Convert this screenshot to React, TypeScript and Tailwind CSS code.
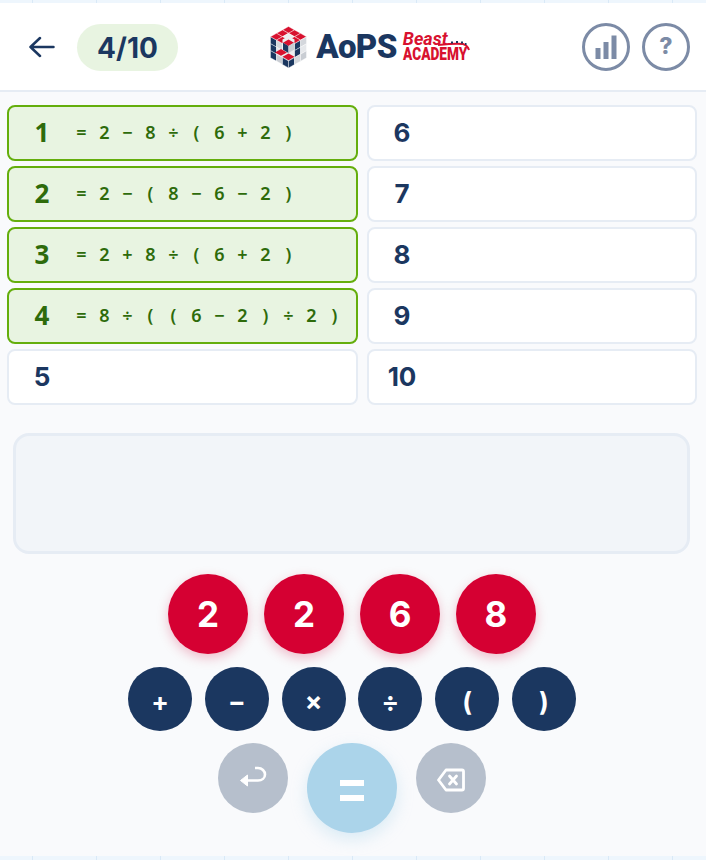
const rows = [
  { n: 1, tokens: ["=", "2", "−", "8", "÷", "(", "6", "+", "2", ")"] },
  { n: 2, tokens: ["=", "2", "−", "(", "8", "−", "6", "−", "2", ")"] },
  { n: 3, tokens: ["=", "2", "+", "8", "÷", "(", "6", "+", "2", ")"] },
  { n: 4, tokens: ["=", "8", "÷", "(", "(", "6", "−", "2", ")", "÷", "2", ")"] },
  { n: 5, tokens: [] },
]
const rightRows = [6, 7, 8, 9, 10]

const ticks = Array.from({ length: 11 })

const TickStrip = ({ tall }: { tall?: boolean }) => (
  <div className={tall ? "flex h-[4px] bg-[#eef6fd] pl-[32px]" : "flex h-[3px] bg-[#eef6fd] pl-[32px]"}>
    {ticks.map((_, i) => (
      <div key={i} className="w-[64px] shrink-0 border-l border-[#d9e9f7]" />
    ))}
  </div>
)

// one isometric tile, walking along the cube's edges
const tile = (x: number, y: number, u: number[], v: number[]) =>
  [
    [x, y],
    [x + u[0], y + u[1]],
    [x + u[0] + v[0], y + u[1] + v[1]],
    [x + v[0], y + v[1]],
  ]
    .map((p) => p.join(","))
    .join(" ")

const A = [6, 3.4]
const B = [-6, 3.4]
const C = [0, 7]
const leftColors = [
  ["#1b3760", "#d4d7dc", "#eceef0"],
  ["#1b3760", "#e6e8eb", "#c9cdd3"],
  ["#1b3760", "#c9cdd3", "#1b3760"],
]
const rightColors = [
  ["#eceef0", "#1b3760", "#d4d7dc"],
  ["#c9cdd3", "#1b3760", "#e6e8eb"],
  ["#1b3760", "#d4d7dc", "#c9cdd3"],
]

const Cube = () => (
  <svg width="37" height="42" viewBox="0 0 37 42">
    {[0, 1, 2].map((i) =>
      [0, 1, 2].map((j) => (
        <g key={`${i}${j}`} stroke="#ffffff" strokeWidth="0.4">
          <polygon
            points={tile(18.5 + A[0] * i + B[0] * j, 0.5 + A[1] * i + B[1] * j, A, B)}
            fill={i === 1 && j === 1 ? "#eceef0" : "#d8112f"}
          />
          <polygon
            points={tile(0.5 + A[0] * i, 10.7 + A[1] * i + C[1] * j, A, C)}
            fill={leftColors[j][i]}
          />
          <polygon
            points={tile(18.5 + (-B[0]) * i, 21 - B[1] * i + C[1] * j, [-B[0], -B[1]], C)}
            fill={rightColors[j][i]}
          />
        </g>
      )),
    )}
    <polygon points="18.5,10 24.5,13.4 24.5,31 18.5,34 12.5,31 12.5,13.4" fill="#eceef0" />
    <polygon points="18.5,13.5 24,16.7 18.5,20 13,16.7" fill="#d8112f" />
    <polygon points="13,16.7 18.5,20 18.5,27 13,23.7" fill="#1b3760" />
    <polygon points="18.5,20 24,16.7 24,23.7 18.5,27" fill="#c9cdd3" />
    <polygon points="11,23 17,26.4 11,29.8 5,26.4" fill="#d8112f" />
    <polygon points="18.5,27.4 24.5,30.8 18.5,34.2 12.5,30.8" fill="#d8112f" />
  </svg>
)

const Ink = "#1b3760"

function Cell({ n }: { n: number }) {
  return (
    <div className="flex h-[56px] items-center rounded-[8px] border-2 border-[#e6ecf4] bg-white pb-[2px] text-[26px] font-bold text-[#1b3760]">
      <span className="w-[66px] text-center">{n}</span>
    </div>
  )
}

export default function App() {
  return (
    <div className="flex h-[860px] w-[706px] flex-col overflow-hidden bg-[#f9fafc] font-['Inter',sans-serif]">
      <TickStrip />

      <header className="flex h-[89px] shrink-0 items-center justify-between border-b-2 border-[#e6ecf4] bg-white pl-[29px] pr-[16px]">
        <div className="flex items-center gap-[22px]">
          <svg width="26" height="22" viewBox="0 0 26 22" fill="none" stroke={Ink} strokeWidth="2.5" strokeLinecap="round" strokeLinejoin="round">
            <path d="M1.5 11H24.5M11 2L1.5 11L11 20" />
          </svg>
          <div className="mt-[2px] flex h-[47px] w-[101px] items-center justify-center rounded-full bg-[#e8f4e1] text-[28px] font-bold text-[#1b3760]">
            4/10
          </div>
        </div>

        <div className="mr-[20px] flex items-center">
          <Cube />
          <span className="ml-[9px] font-['Roboto',sans-serif] text-[33px] leading-none font-black tracking-[-0.6px] text-[#1b3760]">AoPS</span>
          <div className="relative ml-[6px] flex w-[67px] flex-col font-['Roboto',sans-serif] text-[#d8112f]">
            <span className="text-[18px] leading-[14px] font-bold italic">Beast</span>
            <span className="origin-left scale-x-[0.72] text-[19px] leading-[15px] font-black whitespace-nowrap">ACADEMY</span>
            <svg className="absolute top-[7px] left-[34px]" width="33" height="12" viewBox="0 0 33 12" fill="none">
              <path d="M1 6C10 5 20 4 26 5C29 6 31 8 32 11" stroke="#d8112f" strokeWidth="2" />
              <path d="M14 3.5H16M19 3H21M24 3.5H26M28 5H29.5" stroke="#1b3760" strokeWidth="1.8" />
            </svg>
          </div>
        </div>

        <div className="flex items-center gap-[12px]">
          <div className="flex h-[48px] w-[48px] items-center justify-center rounded-full border-[3px] border-[#7c8ba6]">
            <svg width="22" height="24" viewBox="0 0 22 24" fill="#7c8ba6">
              <rect x="0.5" y="13" width="5" height="11" />
              <rect x="8.5" y="7" width="5" height="17" />
              <rect x="16.5" y="0.5" width="5" height="23.5" />
            </svg>
          </div>
          <div className="flex h-[48px] w-[48px] items-center justify-center rounded-full border-[3px] border-[#7c8ba6] text-[23px] font-extrabold text-[#7c8ba6]">
            ?
          </div>
        </div>
      </header>

      <main className="flex flex-1 flex-col">
        <div className="mt-[13px] flex gap-[9px] pl-[7px] pr-[9px]">
          <div className="flex w-[351px] flex-col gap-[5px]">
            {rows.map((r) =>
              r.tokens.length ? (
                <div key={r.n} className="flex h-[56px] items-center rounded-[8px] border-2 border-[#64ae0c] bg-[#e8f4e1] pb-[2px] text-[#2e6b0b]">
                  <span className="w-[66px] shrink-0 text-center font-['Noto_Sans',sans-serif] text-[26px] font-bold">{r.n}</span>
                  <div className="-ml-[5px] flex font-['Noto_Sans',sans-serif] text-[18px] font-semibold">
                    {r.tokens.map((t, i) => (
                      <span key={i} className="w-[23px] shrink-0 text-center">{t}</span>
                    ))}
                  </div>
                </div>
              ) : (
                <Cell key={r.n} n={r.n} />
              ),
            )}
          </div>
          <div className="flex w-[330px] flex-col gap-[5px]">
            {rightRows.map((n) => (
              <Cell key={n} n={n} />
            ))}
          </div>
        </div>

        <div className="mt-[28px] ml-[13px] mr-[16px] h-[121px] rounded-[16px] border-[3px] border-[#e6ecf4] bg-[#f2f5f9]" />

        <div className="mt-[20px] flex justify-center gap-[16px] pr-[2px]">
          {["2", "2", "6", "8"].map((d, i) => (
            <div key={i} className="flex h-[80px] w-[80px] items-center justify-center rounded-full bg-[#d50032] text-[35px] font-bold text-white shadow-[0_4px_12px_rgba(213,0,50,0.25)]">
              {d}
            </div>
          ))}
        </div>

        <div className="mt-[13px] flex justify-center gap-[12.8px] pr-[2px]">
          {["+", "−", "×", "÷", "(", ")"].map((o) => (
            <div key={o} className="flex h-[64px] w-[64px] items-center justify-center rounded-full bg-[#1b3760] pt-[4px] text-[26px] font-bold text-white">
              {o}
            </div>
          ))}
        </div>

        <div className="mt-[12px] flex items-start justify-center gap-[19px] pr-[2px]">
          <div className="flex h-[70px] w-[70px] items-center justify-center rounded-full bg-[#b6bfcc]">
            <svg className="mb-[3px]" width="28" height="22" viewBox="0 0 28 22" fill="none" stroke="#ffffff" strokeWidth="2.6">
              <path d="M6 14.5H19C23 14.5 26 12 26 8.5C26 5 23 2 19 2H16" />
              <path d="M8.5 9V20L1.5 14.5Z" fill="#ffffff" strokeWidth="1" strokeLinejoin="round" />
            </svg>
          </div>
          <div className="flex h-[90px] w-[90px] items-center justify-center rounded-full bg-[#abd4ea] shadow-[0_6px_16px_rgba(171,212,234,0.4)]">
            <div className="flex flex-col gap-[9px] pt-[5px]">
              <div className="h-[6px] w-[24px] bg-white" />
              <div className="h-[6px] w-[24px] bg-white" />
            </div>
          </div>
          <div className="flex h-[70px] w-[70px] items-center justify-center rounded-full bg-[#b6bfcc]">
            <svg className="mt-[3px]" width="28" height="24" viewBox="0 0 28 24" fill="none" stroke="#ffffff" strokeWidth="2.8" strokeLinejoin="round" strokeLinecap="round">
              <path d="M9 2H25C26 2 26.5 2.5 26.5 3.5V20.5C26.5 21.5 26 22 25 22H9L1.5 12Z" />
              <path d="M12.5 8L19.5 16M19.5 8L12.5 16" />
            </svg>
          </div>
        </div>
      </main>

      <TickStrip tall />
    </div>
  )
}
